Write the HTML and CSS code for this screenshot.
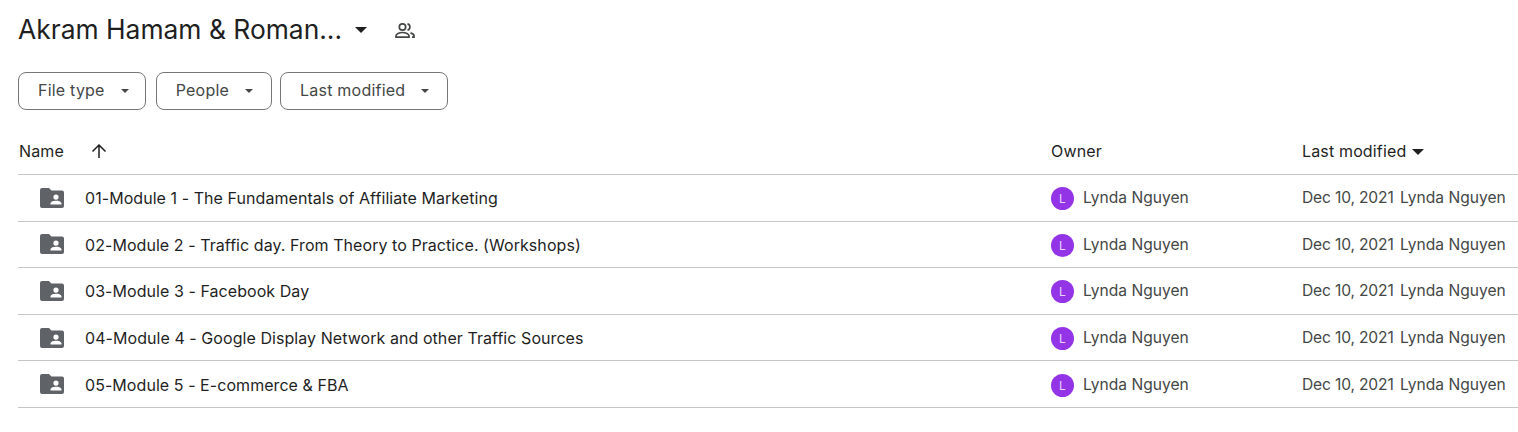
FILE: index.html
```html
<!DOCTYPE html>
<html lang="en">

<head>
  <meta charset="UTF-8">
  <title>Akram Hamam &amp; Roman...</title>
  <link rel="stylesheet" href="styles.css">
</head>

<body>
  <div class="drive">
    <div class="title-bar">
      <h1 class="title">Akram Hamam &amp; Roman...</h1>
      <svg class="title-caret" width="12" height="6" viewBox="0 0 12 6"><path d="M0 0h12L6 6z" /></svg>
      <svg class="shared-icon" width="24" height="24" viewBox="0 0 24 24" fill="none" stroke="#444746" stroke-width="1.7">
        <circle cx="9.5" cy="8" r="3.2" />
        <path d="M3 18.2v-1.4c0-1.9 3.2-3.3 6.500-3.300s6.500 1.400 6.500 3.300v1.400z" />
        <path d="M14.500 4.900a3.200 3.200 0 0 1 0 6.200M17.500 13.900c2 .6 3.500 1.600 3.500 2.900v1.400h-2" />
      </svg>
    </div>

    <div class="filters">
      <button class="chip">File type <span class="chip-caret"></span></button>
      <button class="chip chip-wide">People <span class="chip-caret"></span></button>
      <button class="chip chip-wide">Last modified <span class="chip-caret"></span></button>
    </div>

    <div class="row head">
      <div class="name-col head-name">
        <span>Name</span>
        <svg class="sort-arrow" width="16" height="16" viewBox="0 0 16 16" fill="none" stroke="#1f1f1f" stroke-width="1.500"><path d="M8 15V2M1.500 8.500 8 2l6.500 6.500" /></svg>
      </div>
      <div>Owner</div>
      <div class="mod-col">Last modified <span class="head-caret"></span></div>
    </div>

    <div class="row item">
      <div class="name-col">
        <svg class="folder" width="24" height="20" viewBox="0 0 24 20"><path fill-rule="evenodd" d="M2 0h7l2.500 2.500H22a2 2 0 0 1 2 2V18a2 2 0 0 1-2 2H2a2 2 0 0 1-2-2V2a2 2 0 0 1 2-2zm14 6.500a2.600 2.600 0 1 0 0 5.200 2.600 2.600 0 0 0 0-5.200zM10.500 16.500h11v-1.300c0-1.700-3.600-2.500-5.500-2.500s-5.500.8-5.500 2.500z" /></svg>
        <span class="file-name">01-Module 1 - The Fundamentals of Affiliate Marketing</span>
      </div>
      <div class="owner"><span class="avatar">L</span>Lynda Nguyen</div>
      <div class="modified"><span class="date">Dec 10, 2021</span> Lynda Nguyen</div>
    </div>

    <div class="row item">
      <div class="name-col">
        <svg class="folder" width="24" height="20" viewBox="0 0 24 20"><path fill-rule="evenodd" d="M2 0h7l2.500 2.500H22a2 2 0 0 1 2 2V18a2 2 0 0 1-2 2H2a2 2 0 0 1-2-2V2a2 2 0 0 1 2-2zm14 6.500a2.600 2.600 0 1 0 0 5.200 2.600 2.600 0 0 0 0-5.200zM10.500 16.500h11v-1.300c0-1.700-3.600-2.500-5.500-2.500s-5.500.8-5.500 2.500z" /></svg>
        <span class="file-name">02-Module 2 - Traffic day. From Theory to Practice. (Workshops)</span>
      </div>
      <div class="owner"><span class="avatar">L</span>Lynda Nguyen</div>
      <div class="modified"><span class="date">Dec 10, 2021</span> Lynda Nguyen</div>
    </div>

    <div class="row item">
      <div class="name-col">
        <svg class="folder" width="24" height="20" viewBox="0 0 24 20"><path fill-rule="evenodd" d="M2 0h7l2.500 2.500H22a2 2 0 0 1 2 2V18a2 2 0 0 1-2 2H2a2 2 0 0 1-2-2V2a2 2 0 0 1 2-2zm14 6.500a2.600 2.600 0 1 0 0 5.200 2.600 2.600 0 0 0 0-5.200zM10.500 16.500h11v-1.300c0-1.700-3.600-2.500-5.500-2.500s-5.500.8-5.500 2.500z" /></svg>
        <span class="file-name">03-Module 3 - Facebook Day</span>
      </div>
      <div class="owner"><span class="avatar">L</span>Lynda Nguyen</div>
      <div class="modified"><span class="date">Dec 10, 2021</span> Lynda Nguyen</div>
    </div>

    <div class="row item">
      <div class="name-col">
        <svg class="folder" width="24" height="20" viewBox="0 0 24 20"><path fill-rule="evenodd" d="M2 0h7l2.500 2.500H22a2 2 0 0 1 2 2V18a2 2 0 0 1-2 2H2a2 2 0 0 1-2-2V2a2 2 0 0 1 2-2zm14 6.500a2.600 2.600 0 1 0 0 5.200 2.600 2.600 0 0 0 0-5.200zM10.500 16.500h11v-1.300c0-1.700-3.600-2.500-5.500-2.500s-5.500.8-5.500 2.500z" /></svg>
        <span class="file-name">04-Module 4 - Google Display Network and other Traffic Sources</span>
      </div>
      <div class="owner"><span class="avatar">L</span>Lynda Nguyen</div>
      <div class="modified"><span class="date">Dec 10, 2021</span> Lynda Nguyen</div>
    </div>

    <div class="row item">
      <div class="name-col">
        <svg class="folder" width="24" height="20" viewBox="0 0 24 20"><path fill-rule="evenodd" d="M2 0h7l2.500 2.500H22a2 2 0 0 1 2 2V18a2 2 0 0 1-2 2H2a2 2 0 0 1-2-2V2a2 2 0 0 1 2-2zm14 6.500a2.600 2.600 0 1 0 0 5.200 2.600 2.600 0 0 0 0-5.200zM10.500 16.500h11v-1.300c0-1.700-3.600-2.500-5.500-2.500s-5.500.8-5.500 2.500z" /></svg>
        <span class="file-name">05-Module 5 - E-commerce &amp; FBA</span>
      </div>
      <div class="owner"><span class="avatar">L</span>Lynda Nguyen</div>
      <div class="modified"><span class="date">Dec 10, 2021</span> Lynda Nguyen</div>
    </div>
  </div>
</body>

</html>
```

FILE: styles.css
```css
body {
  margin: 0;
  background: #fff;
  color: #1f1f1f;
  font-family: Inter, sans-serif;
  overflow: hidden;
}

.drive {
  padding-left: 18px;
}

.title-bar {
  display: flex;
  align-items: center;
  height: 60px;
}

.title {
  margin: 0 0 2px;
  font-size: 26.400px;
  font-weight: 400;
  line-height: 58px;
}

.title-caret {
  margin-left: 13px;
  fill: #1f1f1f;
}

.shared-icon {
  margin: 2px 0 0 26px;
}

.filters {
  display: flex;
  gap: 10px;
  margin-top: 12px;
}

.filters .chip:last-child {
  margin-left: -2px;
}

.chip {
  display: flex;
  align-items: center;
  height: 38px;
  padding: 0 16px 2px 19px;
  background: #fff;
  border: 1px solid #747775;
  border-radius: 8px;
  color: #444746;
  font-family: inherit;
  font-size: 16px;
  letter-spacing: .22px;
}

.chip-wide {
  padding-right: 18px;
}

.chip-caret {
  margin: 2px 0 0 16px;
  border-top: 4px solid #444746;
  border-left: 4.500px solid transparent;
  border-right: 4.500px solid transparent;
}

.row {
  display: grid;
  grid-template-columns: 1033px 251px 1fr;
  align-items: center;
  border-bottom: 1px solid #c7c7c7;
  font-size: 15.600px;
}

.head {
  height: 46px;
  padding-top: 18px;
  font-size: 16px;
  letter-spacing: .15px;
}

.head-name {
  padding-left: 1px;
}

.item {
  height: 45.600px;
  color: #444746;
}

.name-col {
  display: flex;
  align-items: center;
}

.sort-arrow {
  margin-left: 27px;
}

.head-caret {
  display: inline-block;
  margin-left: 1px;
  vertical-align: 2px;
  border-top: 6px solid #1f1f1f;
  border-left: 6px solid transparent;
  border-right: 6px solid transparent;
}

.folder {
  margin-left: 22px;
  fill: #5f6368;
}

.file-name {
  margin-left: 21px;
  padding-top: 1px;
  color: #1f1f1f;
  font-size: 16px;
  letter-spacing: .06px;
}

.owner {
  display: flex;
  align-items: center;
}

.avatar {
  display: flex;
  align-items: center;
  justify-content: center;
  width: 23px;
  height: 23px;
  margin: 2px 9px 0 0;
  border-radius: 50%;
  background: #9334e6;
  color: #e8d4fa;
  font-size: 12px;
}

.modified {
  white-space: nowrap;
}

.date {
  margin-right: 2px;
  letter-spacing: -.16px;
}
```
